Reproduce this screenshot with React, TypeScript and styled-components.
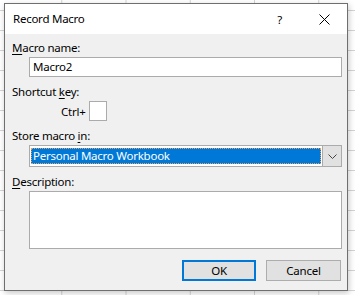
import React from "react";
import styled, { createGlobalStyle } from "styled-components";

const Global = createGlobalStyle`
  html, body { margin: 0; padding: 0; }
  body { width: 355px; height: 295px; overflow: hidden; background: #fff; }
`;

const Sheet = styled.div`
  width: 355px;
  height: 295px;
  box-sizing: border-box;
  padding: 3px 0 0 4px;
  background-color: #fff;
  background-image:
    linear-gradient(to bottom, transparent 19px, #d4d4d4 19px, #d4d4d4 20px),
    linear-gradient(to right, transparent 63px, #d4d4d4 63px, #d4d4d4 64px);
  background-size: 100% 20px, 64.25px 100%;
  background-position: 0 -9px, -2px 0;
`;

const Dialog = styled.div`
  width: 344px;
  height: 288px;
  box-sizing: border-box;
  border: 1px solid #6f6f6f;
  background: #f0f0f0;
  box-shadow: 1px 2px 6px rgba(0, 0, 0, 0.22);
  display: flex;
  flex-direction: column;
  font-family: "Noto Sans", "Open Sans", sans-serif;
  font-size: 11.5px;
  letter-spacing: -0.25px;
  color: #000;
`;

const TitleBar = styled.div`
  height: 30px;
  background: #fff;
  display: flex;
  align-items: center;
  padding-left: 8px;
`;

const Title = styled.div`
  flex: 1;
  line-height: 16px;
`;

const TitleButton = styled.div<{ $w: number }>`
  width: ${(p) => p.$w}px;
  height: 30px;
  display: flex;
  align-items: center;
  justify-content: center;
`;

const Body = styled.div`
  flex: 1;
  display: flex;
  flex-direction: column;
  padding: 6px 0 0 7px;
`;

const Label = styled.div<{ $mt?: number }>`
  line-height: 16px;
  height: 16px;
  margin-top: ${(p) => p.$mt ?? 0}px;
  white-space: nowrap;
  u { text-underline-offset: 2px; }
`;

const Field = styled.div<{ $h: number; $mt?: number }>`
  margin-left: 17px;
  margin-right: 5px;
  margin-top: ${(p) => p.$mt ?? 0}px;
  height: ${(p) => p.$h}px;
  box-sizing: border-box;
  border: 1px solid #ababab;
  background: #fff;
  display: flex;
  align-items: center;
  padding-left: 3px;
  line-height: 16px;
`;

const CtrlRow = styled.div`
  display: flex;
  align-items: center;
  margin-top: 1px;
  padding-left: 49px;
  height: 20px;
  gap: 4px;
`;

const KeyBox = styled.div`
  width: 18px;
  height: 20px;
  box-sizing: border-box;
  border: 1px solid #ababab;
  background: #fff;
`;

const Combo = styled.div`
  margin: 1px 5px 0 17px;
  height: 22px;
  box-sizing: border-box;
  border: 1px solid #ababab;
  background: #fff;
  display: flex;
`;

const Selected = styled.div`
  flex: 1;
  margin: 2px 1px 2px 1px;
  background: #0078d7;
  color: #fff;
  outline: 1px dotted #e8a060;
  outline-offset: -1px;
  display: flex;
  align-items: center;
  padding-left: 2px;
  line-height: 16px;
`;

const ComboButton = styled.div`
  width: 18px;
  background: #e1e1e1;
  border-left: 1px solid #ababab;
  display: flex;
  align-items: center;
  justify-content: center;
`;

const ButtonRow = styled.div`
  display: flex;
  justify-content: flex-end;
  gap: 10px;
  margin: 11px 6px 0 0;
`;

const Button = styled.div<{ $default?: boolean; $w: number }>`
  width: ${(p) => p.$w}px;
  height: 21px;
  box-sizing: border-box;
  background: #e1e1e1;
  border: ${(p) => (p.$default ? "2px solid #0078d7" : "1px solid #adadad")};
  display: flex;
  align-items: center;
  justify-content: center;
  line-height: 16px;
`;

export default function App() {
  return (
    <>
      <Global />
      <Sheet>
        <Dialog>
          <TitleBar>
            <Title>Record Macro</Title>
            <TitleButton $w={43}>?</TitleButton>
            <TitleButton $w={46}>
              <svg width="11" height="11" viewBox="0 0 11 11">
                <path d="M0.5 0.5 L10.5 10.5 M10.5 0.5 L0.5 10.5" stroke="#000" strokeWidth="1" fill="none" />
              </svg>
            </TitleButton>
          </TitleBar>
          <Body>
            <Label>
              <u>M</u>acro name:
            </Label>
            <Field $h={20} $mt={1}>Macro2</Field>
            <Label $mt={7}>
              Shortcut <u>k</u>ey:
            </Label>
            <CtrlRow>
              <span>Ctrl+</span>
              <KeyBox />
            </CtrlRow>
            <Label $mt={7}>
              Store macro <u>i</u>n:
            </Label>
            <Combo>
              <Selected>Personal Macro Workbook</Selected>
              <ComboButton>
                <svg width="9" height="5" viewBox="0 0 9 5">
                  <path d="M0.5 0.5 L4.5 4.5 L8.5 0.5" stroke="#444" strokeWidth="1" fill="none" />
                </svg>
              </ComboButton>
            </Combo>
            <Label $mt={7}>
              <u>D</u>escription:
            </Label>
            <Field $h={58} $mt={1} />
            <ButtonRow>
              <Button $default $w={74}>OK</Button>
              <Button $w={75}>Cancel</Button>
            </ButtonRow>
          </Body>
        </Dialog>
      </Sheet>
    </>
  );
}
